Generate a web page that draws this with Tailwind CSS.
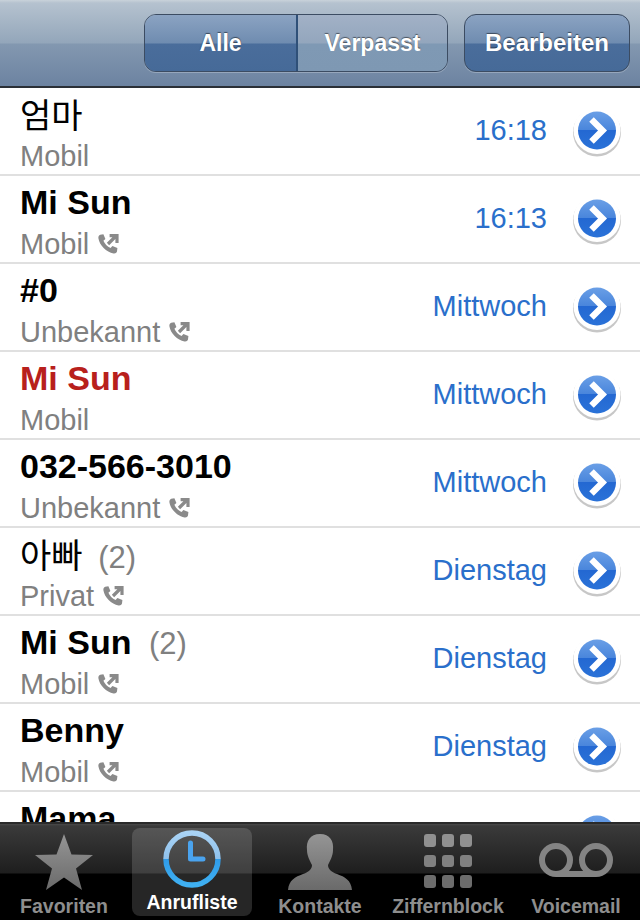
<!DOCTYPE html>
<html lang="de">
<head>
<meta charset="UTF-8">
<title>Anrufliste</title>
<script src="https://cdn.jsdelivr.net/npm/@tailwindcss/browser@4"></script>
</head>
<body class="bg-white">
<svg width="0" height="0" class="absolute">
  <defs>
    <linearGradient id="tabGray" x1="0" y1="0" x2="0" y2="1"><stop offset="0" stop-color="#959595"/><stop offset="1" stop-color="#6a6a6a"/></linearGradient>
    <linearGradient id="ringBlue" x1="0" y1="0" x2="0" y2="1"><stop offset="0" stop-color="#a9d3f5"/><stop offset=".5" stop-color="#8fc1ec"/><stop offset=".5" stop-color="#2f9be8"/><stop offset="1" stop-color="#3fb0f2"/></linearGradient>
    <linearGradient id="discBlue" x1="0" y1="0" x2="0" y2="1"><stop offset="0" stop-color="#6a9fe6"/><stop offset=".48" stop-color="#4a86dc"/><stop offset=".5" stop-color="#2468d2"/><stop offset="1" stop-color="#2a72d8"/></linearGradient>
    <symbol id="chev" viewBox="0 0 52 52">
      <circle cx="26" cy="27.5" r="24" fill="#000" opacity=".22"/>
      <circle cx="26" cy="25.5" r="23.5" fill="#fff"/>
      <circle cx="26" cy="25.5" r="19" fill="url(#discBlue)"/>
      <path d="M20.5 14.5 L31.5 25.5 L20.5 36.5" fill="none" stroke="#fff" stroke-width="6.4" stroke-linecap="butt" stroke-linejoin="miter"/>
    </symbol>
    <symbol id="call" viewBox="0 0 22 22">
      <path d="M3.2 1.8 L6.4 1.2 L8.4 6 L6.4 7.8 C7.4 10.6 10.4 13.6 13.6 15 L15.4 13 L20.4 15 L20 18.6 C19.6 20 18.2 20.6 16.6 20.4 C9.4 19.2 2.4 12.2 1.4 5.2 C1.2 3.6 2 2.4 3.2 1.8 Z" fill="#8a8a8a"/>
      <path d="M11 11 L18 4 M12.6 2.6 H20 V10" fill="none" stroke="#8a8a8a" stroke-width="3.2"/>
    </symbol>
  </defs>
</svg>
<div class="w-[640px] h-[920px] flex flex-col overflow-hidden font-['Liberation_Sans',Arial,sans-serif]">

  <!-- nav bar -->
  <header class="h-[88px] shrink-0 flex justify-end items-start pt-[14px] pr-[10px] gap-4 border-b-2 border-[#2a2f36] bg-[linear-gradient(#c9d2da_0,#b5c2cf_3px,#93a6ba_43px,#8398b0_44px,#6c83a1_86px)]">
    <div class="w-[304px] h-[58px] flex rounded-xl border border-[#3c4c62] overflow-hidden shadow-[0_1px_0_rgba(255,255,255,.25)]">
      <div class="w-[153px] flex items-center justify-center border-r-2 border-[#2f5078] text-white font-bold text-[23px] [text-shadow:0_-1px_1px_rgba(0,0,0,.5)] bg-[linear-gradient(#8ba3c2_0,#6f8cb0_28px,#4a6d9b_29px,#466a98_100%)]">Alle</div>
      <div class="flex-1 flex items-center justify-center text-white font-bold text-[23px] [text-shadow:0_-1px_1px_rgba(0,0,0,.5)] bg-[linear-gradient(#a2b1c6_0,#93a6bd_28px,#7f99b4_29px,#7e98b3_100%)]">Verpasst</div>
    </div>
    <div class="w-[166px] h-[58px] flex items-center justify-center rounded-xl border border-[#3c4c62] text-white font-bold text-[24px] [text-shadow:0_-1px_1px_rgba(0,0,0,.5)] shadow-[0_1px_0_rgba(255,255,255,.25)] bg-[linear-gradient(#8ba3c2_0,#6f8cb0_28px,#4a6d9b_29px,#466a98_100%)]">Bearbeiten</div>
  </header>

  <!-- call list -->
  <main class="flex-1 overflow-hidden">
    <div class="h-[88px] flex items-center border-b-2 border-[#e0e0e0] pl-5 pr-[17px]">
      <div class="flex-1 min-w-0">
        <div class="h-[50px] leading-[50px] text-[34px] text-black font-['Noto_Sans_CJK_KR',sans-serif]">엄마</div>
        <div class="h-[34px] leading-[30px] flex items-center gap-2 text-[29px] text-[#808080]">Mobil</div>
      </div>
      <div class="text-[#2a6fcb] text-[29px] mr-[24px]">16:18</div>
      <svg class="w-[52px] h-[52px]"><use href="#chev"/></svg>
    </div>
    <div class="h-[88px] flex items-center border-b-2 border-[#e0e0e0] pl-5 pr-[17px]">
      <div class="flex-1 min-w-0">
        <div class="h-[50px] leading-[50px] text-[34px] font-bold text-black">Mi Sun</div>
        <div class="h-[34px] leading-[30px] flex items-center gap-2 text-[29px] text-[#808080]">Mobil <svg class="w-[22px] h-[22px]"><use href="#call"/></svg></div>
      </div>
      <div class="text-[#2a6fcb] text-[29px] mr-[24px]">16:13</div>
      <svg class="w-[52px] h-[52px]"><use href="#chev"/></svg>
    </div>
    <div class="h-[88px] flex items-center border-b-2 border-[#e0e0e0] pl-5 pr-[17px]">
      <div class="flex-1 min-w-0">
        <div class="h-[50px] leading-[50px] text-[34px] font-bold text-black">#0</div>
        <div class="h-[34px] leading-[30px] flex items-center gap-2 text-[29px] text-[#808080]">Unbekannt <svg class="w-[22px] h-[22px]"><use href="#call"/></svg></div>
      </div>
      <div class="text-[#2a6fcb] text-[29px] mr-[24px]">Mittwoch</div>
      <svg class="w-[52px] h-[52px]"><use href="#chev"/></svg>
    </div>
    <div class="h-[88px] flex items-center border-b-2 border-[#e0e0e0] pl-5 pr-[17px]">
      <div class="flex-1 min-w-0">
        <div class="h-[50px] leading-[50px] text-[34px] font-bold text-[#b8201c]">Mi Sun</div>
        <div class="h-[34px] leading-[30px] flex items-center gap-2 text-[29px] text-[#808080]">Mobil</div>
      </div>
      <div class="text-[#2a6fcb] text-[29px] mr-[24px]">Mittwoch</div>
      <svg class="w-[52px] h-[52px]"><use href="#chev"/></svg>
    </div>
    <div class="h-[88px] flex items-center border-b-2 border-[#e0e0e0] pl-5 pr-[17px]">
      <div class="flex-1 min-w-0">
        <div class="h-[50px] leading-[50px] text-[34px] font-bold text-black">032-566-3010</div>
        <div class="h-[34px] leading-[30px] flex items-center gap-2 text-[29px] text-[#808080]">Unbekannt <svg class="w-[22px] h-[22px]"><use href="#call"/></svg></div>
      </div>
      <div class="text-[#2a6fcb] text-[29px] mr-[24px]">Mittwoch</div>
      <svg class="w-[52px] h-[52px]"><use href="#chev"/></svg>
    </div>
    <div class="h-[88px] flex items-center border-b-2 border-[#e0e0e0] pl-5 pr-[17px]">
      <div class="flex-1 min-w-0">
        <div class="h-[50px] leading-[50px] text-[34px] text-black font-['Noto_Sans_CJK_KR',sans-serif]">아빠 <span class="ml-2 text-[#808080] text-[31px] font-['Liberation_Sans',sans-serif]">(2)</span></div>
        <div class="h-[34px] leading-[30px] flex items-center gap-2 text-[29px] text-[#808080]">Privat <svg class="w-[22px] h-[22px]"><use href="#call"/></svg></div>
      </div>
      <div class="text-[#2a6fcb] text-[29px] mr-[24px]">Dienstag</div>
      <svg class="w-[52px] h-[52px]"><use href="#chev"/></svg>
    </div>
    <div class="h-[88px] flex items-center border-b-2 border-[#e0e0e0] pl-5 pr-[17px]">
      <div class="flex-1 min-w-0">
        <div class="h-[50px] leading-[50px] text-[34px] font-bold text-black">Mi Sun <span class="ml-2 text-[#808080] text-[31px] font-normal">(2)</span></div>
        <div class="h-[34px] leading-[30px] flex items-center gap-2 text-[29px] text-[#808080]">Mobil <svg class="w-[22px] h-[22px]"><use href="#call"/></svg></div>
      </div>
      <div class="text-[#2a6fcb] text-[29px] mr-[24px]">Dienstag</div>
      <svg class="w-[52px] h-[52px]"><use href="#chev"/></svg>
    </div>
    <div class="h-[88px] flex items-center border-b-2 border-[#e0e0e0] pl-5 pr-[17px]">
      <div class="flex-1 min-w-0">
        <div class="h-[50px] leading-[50px] text-[34px] font-bold text-black">Benny</div>
        <div class="h-[34px] leading-[30px] flex items-center gap-2 text-[29px] text-[#808080]">Mobil <svg class="w-[22px] h-[22px]"><use href="#call"/></svg></div>
      </div>
      <div class="text-[#2a6fcb] text-[29px] mr-[24px]">Dienstag</div>
      <svg class="w-[52px] h-[52px]"><use href="#chev"/></svg>
    </div>
    <div class="h-[88px] flex items-center border-b-2 border-[#e0e0e0] pl-5 pr-[17px]">
      <div class="flex-1 min-w-0">
        <div class="h-[50px] leading-[50px] text-[34px] font-bold text-black">Mama</div>
        <div class="h-[34px] leading-[30px] flex items-center gap-2 text-[29px] text-[#808080]">Mobil</div>
      </div>
      <div class="text-[#2a6fcb] text-[29px] mr-[24px]">Dienstag</div>
      <svg class="w-[52px] h-[52px]"><use href="#chev"/></svg>
    </div>
  </main>

  <!-- tab bar -->
  <nav class="h-[98px] shrink-0 grid grid-cols-5 px-0 border-t-2 border-[#2a2a2a] bg-[linear-gradient(#4a4a4a_0,#3a3a3a_2px,#1e1e1e_49px,#000_50px,#000_100%)] text-[19.5px] font-bold text-[#8e8e8e] leading-none">
    <div class="flex flex-col items-center pt-[10px]">
      <svg class="w-[60px] h-[56px]" viewBox="0 0 60 56"><path d="M30 0 L37.5 20.5 L59 21 L42 34.5 L48 56 L30 43.5 L12 56 L18 34.5 L1 21 L22.5 20.5 Z" fill="url(#tabGray)"/></svg>
      <span class="mt-[7px]">Favoriten</span>
    </div>
    <div class="mx-1 mt-1 mb-[4px] rounded-lg bg-white/15 flex flex-col items-center pt-[1px] text-white">
      <svg class="w-[60px] h-[60px]" viewBox="0 0 60 60">
        <circle cx="30" cy="30" r="26" fill="none" stroke="url(#ringBlue)" stroke-width="5.5"/>
        <path d="M28.5 14 V30 H41" fill="none" stroke="#4aa3ee" stroke-width="5" stroke-linecap="round" stroke-linejoin="round"/>
      </svg>
      <span class="mt-[4px]">Anrufliste</span>
    </div>
    <div class="flex flex-col items-center pt-[10px]">
      <svg class="w-[66px] h-[56px]" viewBox="0 0 66 56"><path d="M33 0 C43 0 47 7 46 16 C46 22 43 27 41 31 C41 35 44 38 50 40 C58 43 64 46 65 56 H1 C2 46 8 43 16 40 C22 38 25 35 25 31 C23 27 20 22 20 16 C19 7 23 0 33 0 Z" fill="url(#tabGray)"/></svg>
      <span class="mt-[7px]">Kontakte</span>
    </div>
    <div class="flex flex-col items-center pt-[10px]">
      <div class="w-[48px] h-[54px] grid grid-cols-3 gap-x-[6px] gap-y-[8px]">
        <div class="rounded-[3px] bg-[#909090]"></div><div class="rounded-[3px] bg-[#909090]"></div><div class="rounded-[3px] bg-[#909090]"></div>
        <div class="rounded-[3px] bg-[#808080]"></div><div class="rounded-[3px] bg-[#808080]"></div><div class="rounded-[3px] bg-[#808080]"></div>
        <div class="rounded-[3px] bg-[#6c6c6c]"></div><div class="rounded-[3px] bg-[#6c6c6c]"></div><div class="rounded-[3px] bg-[#6c6c6c]"></div>
      </div>
      <span class="mt-[9px]">Ziffernblock</span>
    </div>
    <div class="flex flex-col items-center pt-[10px]">
      <svg class="w-[74px] h-[56px]" viewBox="0 0 74 56"><circle cx="17" cy="26" r="14" fill="none" stroke="#848484" stroke-width="6"/><circle cx="57" cy="26" r="14" fill="none" stroke="#848484" stroke-width="6"/><path d="M17 40 H57" stroke="#848484" stroke-width="6"/></svg>
      <span class="mt-[7px]">Voicemail</span>
    </div>
  </nav>
</div>
</body>
</html>
